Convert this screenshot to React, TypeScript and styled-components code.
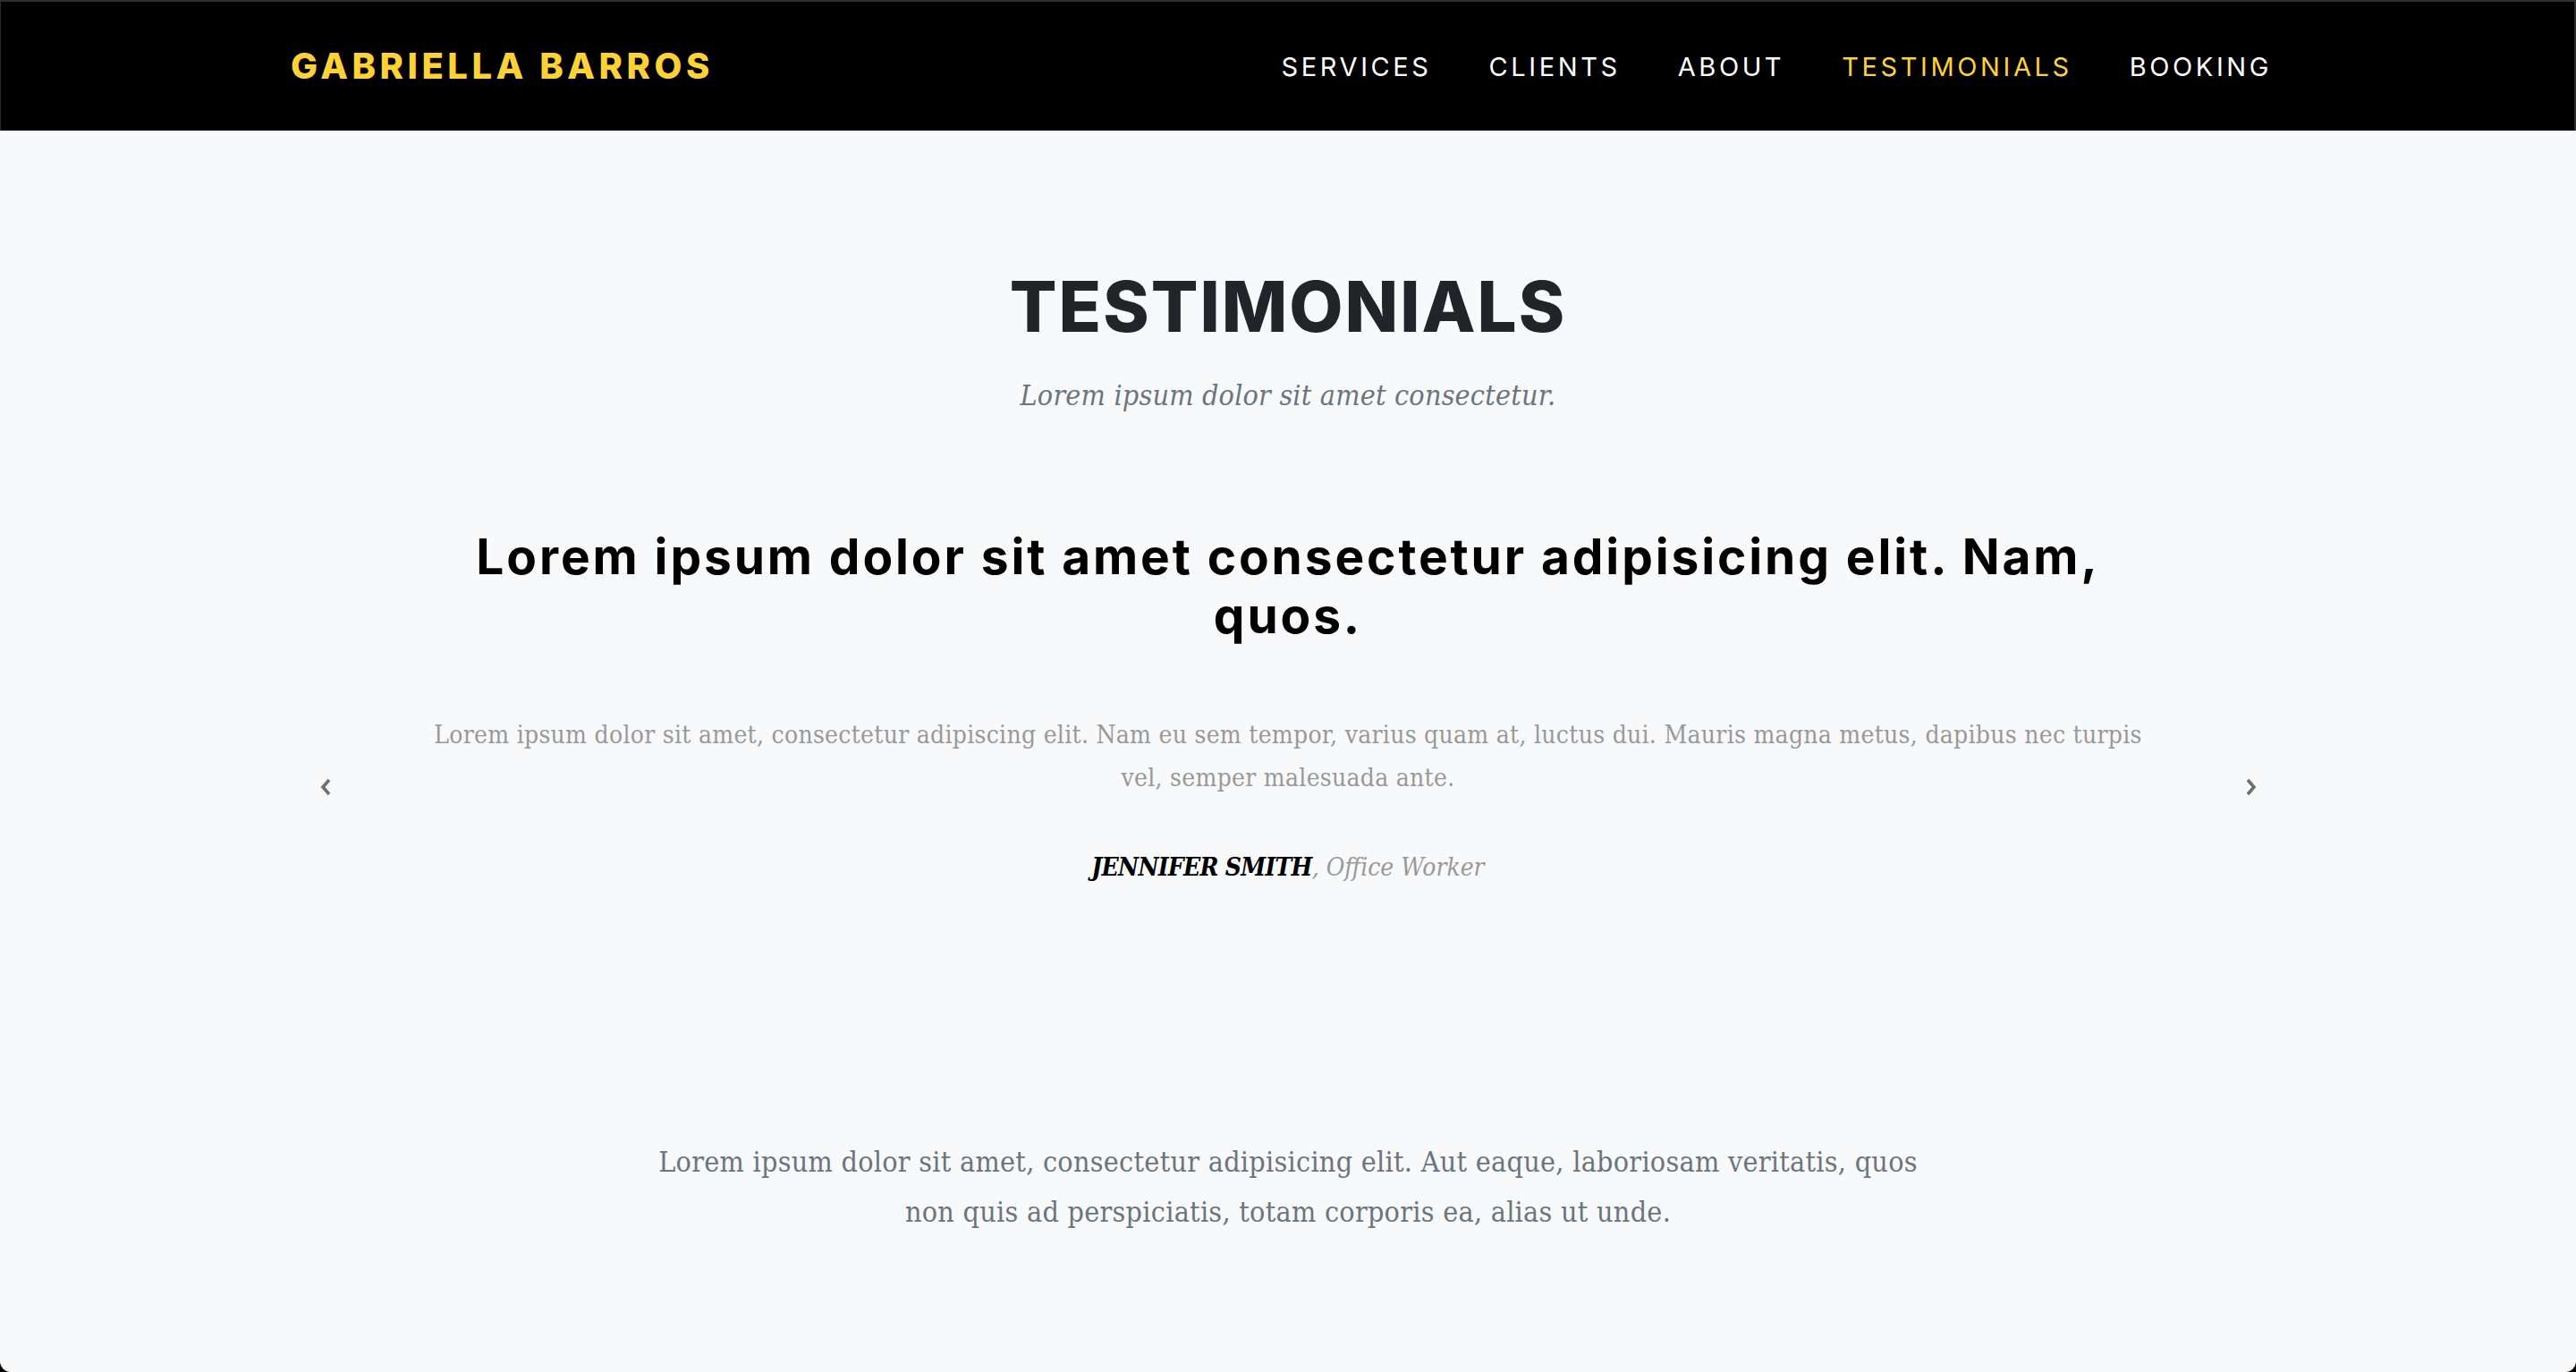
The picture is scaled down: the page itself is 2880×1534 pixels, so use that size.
import React from "react";
import styled, { createGlobalStyle } from "styled-components";

const GlobalStyle = createGlobalStyle`
  html, body { margin: 0; padding: 0; background: #000; }
  body { font-family: "Inter", "Liberation Sans", sans-serif; }
  #root { width: 2880px; height: 1534px; }
`;

const Page = styled.div`
  width: 2880px;
  height: 1534px;
  box-sizing: border-box;
  background: #f8f9fa;
  border-radius: 0 0 12px 12px;
  overflow: hidden;
  display: flex;
  flex-direction: column;
`;

const NavBar = styled.nav`
  box-sizing: border-box;
  height: 146px;
  flex: none;
  background: #000;
  border-top: 2px solid #2e2e2e;
  border-left: 1px solid #2a2a2a;
  border-right: 2px solid #2e2e2e;
  display: flex;
  align-items: center;
  justify-content: space-between;
  padding: 0 338px 0 324px;
`;

const Brand = styled.a`
  font-family: "Inter", sans-serif;
  font-weight: 800;
  font-size: 40px;
  line-height: 1;
  letter-spacing: 4.5px;
  color: #fed136;
  text-transform: uppercase;
  text-decoration: none;
`;

const NavList = styled.ul`
  display: flex;
  gap: 64px;
  list-style: none;
  margin: 0;
  padding: 0;
`;

const NavLink = styled.a<{ $active?: boolean }>`
  font-family: "Inter", sans-serif;
  font-size: 29px;
  font-weight: 400;
  line-height: 1;
  letter-spacing: 3.6px;
  color: ${(p) => (p.$active ? "#fed136" : "#fff")};
  text-decoration: none;
  text-transform: uppercase;
`;

const Section = styled.section`
  padding-top: 158px;
  display: flex;
  flex-direction: column;
  align-items: center;
`;

const Title = styled.h2`
  margin: 0;
  font-family: "Inter", sans-serif;
  font-weight: 800;
  font-size: 78px;
  line-height: 78px;
  color: #212529;
  text-transform: uppercase;
  letter-spacing: 2px;
`;

const serif = `"DejaVu Serif Condensed", "DejaVu Serif", serif`;

const Subtitle = styled.h3`
  margin: 40px 0 0;
  font-family: ${serif};
  font-stretch: condensed;
  font-style: italic;
  font-weight: 400;
  font-size: 32px;
  line-height: 40px;
  letter-spacing: 0.2px;
  color: #6c757d;
`;

const Carousel = styled.div`
  position: relative;
  align-self: stretch;
  margin-top: 127px;
  display: flex;
  flex-direction: column;
  align-items: center;
`;

const Quote = styled.h4`
  margin: 0;
  max-width: 1940px;
  font-family: "Inter", sans-serif;
  font-size: 55px;
  line-height: 66px;
  font-weight: 700;
  letter-spacing: 2.9px;
  color: #000;
  text-align: center;
`;

const QuoteText = styled.p`
  margin: 77px 0 0;
  max-width: 1940px;
  font-family: ${serif};
  font-stretch: condensed;
  font-size: 28px;
  line-height: 48px;
  letter-spacing: 0.28px;
  color: #999;
  text-align: center;
`;

const Author = styled.p`
  margin: 60px 0 0;
  font-family: ${serif};
  font-stretch: condensed;
  font-size: 28px;
  line-height: 32px;
  font-style: italic;
  color: #999;
`;

const Name = styled.strong`
  color: #000;
  font-weight: 700;
  text-transform: uppercase;
  letter-spacing: -0.7px;
`;

const Control = styled.button<{ $side: "left" | "right" }>`
  position: absolute;
  top: 280px;
  ${(p) => (p.$side === "left" ? "left: 357px;" : "right: 356px;")}
  width: 14px;
  height: 22px;
  padding: 0;
  border: 0;
  background: transparent;
  cursor: pointer;
  display: flex;
`;

const Lead = styled.p`
  margin: 285px 0 0;
  max-width: 1460px;
  font-family: ${serif};
  font-stretch: condensed;
  font-size: 32px;
  line-height: 56px;
  letter-spacing: 0.27px;
  color: #6c757d;
  text-align: center;
`;

const Chevron = ({ dir }: { dir: "left" | "right" }) => (
  <svg width="14" height="22" viewBox="0 0 14 22" fill="none">
    <polyline
      points={dir === "left" ? "11,3 4,11 11,19" : "3,3 10,11 3,19"}
      stroke="#6f6f6f"
      strokeWidth="3.6"
      strokeLinecap="butt"
      strokeLinejoin="miter"
    />
  </svg>
);

const links = ["Services", "Clients", "About", "Testimonials", "Booking"];

export default function App() {
  return (
    <>
      <GlobalStyle />
      <Page>
        <NavBar>
          <Brand href="#">Gabriella Barros</Brand>
          <NavList>
            {links.map((l) => (
              <li key={l}>
                <NavLink href="#" $active={l === "Testimonials"}>
                  {l}
                </NavLink>
              </li>
            ))}
          </NavList>
        </NavBar>
        <Section>
          <Title>Testimonials</Title>
          <Subtitle>Lorem ipsum dolor sit amet consectetur.</Subtitle>
          <Carousel>
            <Control $side="left" aria-label="Previous">
              <Chevron dir="left" />
            </Control>
            <Quote>
              Lorem ipsum dolor sit amet consectetur adipisicing elit. Nam, quos.
            </Quote>
            <QuoteText>
              Lorem ipsum dolor sit amet, consectetur adipiscing elit. Nam eu sem tempor, varius quam at,
              luctus dui. Mauris magna metus, dapibus nec turpis vel, semper malesuada ante.
            </QuoteText>
            <Author>
              <Name>Jennifer Smith</Name>, Office Worker
            </Author>
            <Control $side="right" aria-label="Next">
              <Chevron dir="right" />
            </Control>
          </Carousel>
          <Lead>
            Lorem ipsum dolor sit amet, consectetur adipisicing elit. Aut eaque, laboriosam veritatis,
            quos non quis ad perspiciatis, totam corporis ea, alias ut unde.
          </Lead>
        </Section>
      </Page>
    </>
  );
}
